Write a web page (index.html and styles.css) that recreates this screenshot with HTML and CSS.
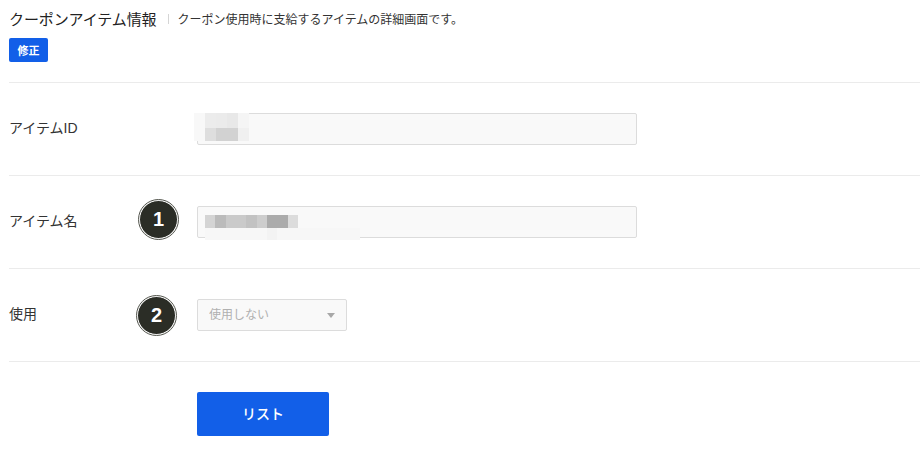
FILE: index.html
```html
<!DOCTYPE html>
<html lang="ja">
<head>
  <meta charset="UTF-8">
  <meta name="viewport" content="width=device-width, initial-scale=1.0">
  <title>クーポンアイテム情報</title>
  <link rel="stylesheet" href="styles.css">
</head>
<body>
  <div class="page-head">
    <div class="title-line">
      <h1>クーポンアイテム情報</h1>
      <p class="title-desc">クーポン使用時に支給するアイテムの詳細画面です。</p>
    </div>
    <button type="button" class="edit-button">修正</button>
  </div>

  <div class="form-row">
    <label class="form-label" for="item-id">アイテムID</label>
    <div class="field">
      <input type="text" id="item-id" class="text-input" disabled>
      <svg class="mosaic mosaic-id" width="55" height="28" viewBox="0 0 55 28">
        <rect x="0" y="0" width="11" height="28" fill="#f8f8f8"/>
        <rect x="11" y="0" width="11" height="15" fill="#ececec"/>
        <rect x="22" y="0" width="11" height="15" fill="#ebebeb"/>
        <rect x="33" y="0" width="11" height="15" fill="#e8e8e8"/>
        <rect x="44" y="0" width="11" height="15" fill="#f5f5f5"/>
        <rect x="11" y="15" width="11" height="13" fill="#dedede"/>
        <rect x="22" y="15" width="22" height="13" fill="#d2d2d2"/>
        <rect x="44" y="15" width="11" height="13" fill="#f0f0f0"/>
      </svg>
    </div>
  </div>

  <div class="form-row">
    <label class="form-label" for="item-name">アイテム名</label>
    <div class="field">
      <input type="text" id="item-name" class="text-input" disabled>
      <svg class="mosaic mosaic-name" width="155" height="25" viewBox="0 0 155 25">
        <rect x="0" y="0" width="10" height="13" fill="#d4d4d4"/>
        <rect x="10" y="0" width="11" height="13" fill="#bbbbbb"/>
        <rect x="21" y="0" width="20" height="13" fill="#cacaca"/>
        <rect x="41" y="0" width="11" height="13" fill="#c2c2c2"/>
        <rect x="52" y="0" width="10" height="13" fill="#cdcdcd"/>
        <rect x="62" y="0" width="21" height="13" fill="#ababab"/>
        <rect x="83" y="0" width="10" height="13" fill="#dcdcdc"/>
        <rect x="0" y="13" width="155" height="12" fill="#f7f7f7"/>
        <rect x="62" y="13" width="10" height="12" fill="#f3f3f3"/>
      </svg>
      <span class="step-badge step-one">1</span>
    </div>
  </div>

  <div class="form-row">
    <label class="form-label" for="use-flag">使用</label>
    <div class="field">
      <div class="select-box">
        <select id="use-flag" class="select-input" disabled>
          <option>使用しない</option>
        </select>
      </div>
      <span class="step-badge step-two">2</span>
    </div>
  </div>

  <div class="form-actions">
    <button type="button" class="list-button">リスト</button>
  </div>
</body>
</html>
```

FILE: styles.css
```css
body {
  font-family: "Liberation Sans", "Noto Sans CJK JP", sans-serif;
  background-color: #ffffff;
  color: #333333;
  margin: 0;
  padding: 0 0 0 9px;
  overflow: hidden;
}

.page-head {
  padding-top: 8px;
  height: 74px;
  border-bottom: 1px solid #ebebeb;
}

.title-line {
  display: flex;
  align-items: center;
  height: 20px;
}

.title-line h1 {
  font-size: 15px;
  font-weight: 400;
  margin: 0;
  color: #222222;
  letter-spacing: -0.1px;
}

.title-desc {
  font-size: 12px;
  margin: 0 0 0 11px;
  padding-left: 10px;
  color: #333333;
  position: relative;
}

.title-desc::before {
  content: '';
  position: absolute;
  left: 0;
  top: 4px;
  height: 10px;
  border-left: 1px solid #d5d5d5;
}

.edit-button {
  display: block;
  width: 39px;
  height: 24px;
  margin-top: 10px;
  padding: 0;
  font-family: inherit;
  font-size: 11px;
  font-weight: 700;
  color: #ffffff;
  background-color: #125fe8;
  border: none;
  border-radius: 2px;
}

.form-row {
  display: flex;
  align-items: center;
  padding: 30px 0;
  height: 32px;
  border-bottom: 1px solid #ebebeb;
}

.form-label {
  width: 188px;
  padding-bottom: 4px;
  font-size: 14px;
  color: #333333;
}

.field {
  position: relative;
}

.text-input {
  display: block;
  width: 440px;
  height: 32px;
  padding: 0 8px;
  box-sizing: border-box;
  background-color: #f9f9f9;
  border: 1px solid #dcdcdc;
  border-radius: 2px;
}

.mosaic {
  position: absolute;
  display: block;
}

.mosaic-id {
  left: -3px;
  top: 0;
}

.mosaic-name {
  left: 8px;
  top: 9px;
}

.select-box {
  position: relative;
  width: 150px;
}

.select-box::after {
  content: '';
  position: absolute;
  right: 12px;
  top: 14px;
  border-left: 4px solid transparent;
  border-right: 4px solid transparent;
  border-top: 5px solid #a8a8a8;
}

.select-input {
  display: block;
  appearance: none;
  width: 150px;
  height: 32px;
  padding: 0 11px;
  font-family: inherit;
  font-size: 12px;
  color: #b0b0b0;
  opacity: 1;
  background-color: #f9f9f9;
  border: 1px solid #dcdcdc;
  border-radius: 2px;
}

.step-badge {
  position: absolute;
  width: 39px;
  height: 39px;
  box-sizing: border-box;
  border-radius: 50%;
  background-color: #2b2d26;
  border: 1px solid #ffffff;
  outline: 1px solid #55574f;
  color: #ffffff;
  font-size: 20px;
  font-weight: 700;
  line-height: 37px;
  text-align: center;
}

.step-one {
  left: -58px;
  top: -6px;
}

.step-two {
  left: -60px;
  top: -3px;
}

.form-actions {
  padding: 30px 0 0 188px;
}

.list-button {
  display: block;
  width: 132px;
  height: 44px;
  padding: 0 0 2px;
  font-family: inherit;
  font-size: 14px;
  font-weight: 500;
  color: #ffffff;
  background-color: #125fe8;
  border: none;
  border-radius: 2px;
}
```
